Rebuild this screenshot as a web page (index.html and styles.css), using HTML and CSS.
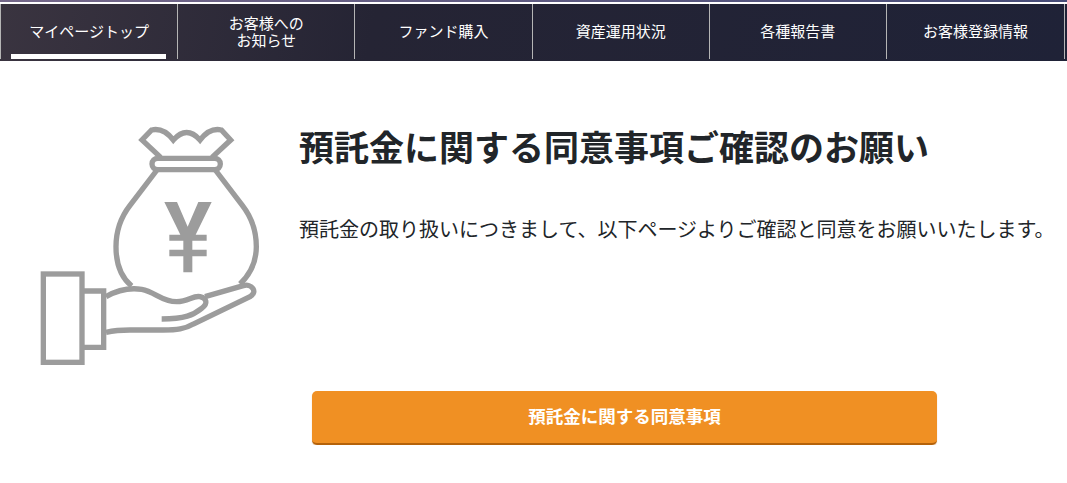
FILE: index.html
```html
<!DOCTYPE html>
<html lang="ja">
  <head>
    <meta charset="utf-8">
    <link rel="stylesheet" href="styles.css">
  </head>
  <body>
    <div class="topbar"></div>
    <nav class="gnav">
      <a class="gnav-item active" href="#"><span>マイページトップ</span></a>
      <a class="gnav-item" href="#"><span>お客様への<br>お知らせ</span></a>
      <a class="gnav-item" href="#"><span>ファンド購入</span></a>
      <a class="gnav-item" href="#"><span>資産運用状況</span></a>
      <a class="gnav-item" href="#"><span>各種報告書</span></a>
      <a class="gnav-item" href="#"><span>お客様登録情報</span></a>
    </nav>

    <main class="content">
      <div class="notice">
        <svg class="notice-icon" viewBox="0 0 720 750" width="240" height="250">
          <!-- cuff -->
          <rect x="40" y="462" width="116" height="265" />
          <path d="M156 513H221V682H156" />
          <!-- bag -->
          <path d="M392 112L336 60L365 30Q400 22 430 60Q470 15 510 60Q540 22 574 30L602 60L546 112" />
          <rect x="366" y="115" width="205" height="34" rx="17" />
          <path d="M381 150L300 256Q258 310 258 380Q258 460 305 498" />
          <path d="M556 150L637 256Q679 310 679 380Q679 445 630 492" />
          <!-- hand -->
          <path d="M228 530Q280 500 335 508C375 515 395 545 440 545C475 545 490 525 510 530C530 535 535 550 515 565C490 585 465 597 395 597" />
          <path d="M525 530L640 497C665 490 685 515 660 530L490 612C465 627 440 630 400 630H300Q260 630 228 637" />
          <!-- yen -->
          <path class="yen" d="M403 246H441L473 320L505 246H545L497 344H530V362H487V389H530V409H487V457H460V409H418V389H460V362H418V344H451Z" />
        </svg>
        <div class="notice-body">
          <h1 class="notice-title">預託金に関する同意事項ご確認のお願い</h1>
          <p class="notice-text">預託金の取り扱いにつきまして、以下ページよりご確認と同意をお願いいたします。</p>
        </div>
      </div>
      <a class="btn-orange" href="#">預託金に関する同意事項</a>
    </main>
  </body>
</html>
```

FILE: styles.css
```css
/* CSS styles */
body {
  margin: 0;
  background-color: #fff;
  color: #212529;
  font-family: "Noto Sans CJK JP", "Noto Sans", sans-serif;
}

a {
  text-decoration: none;
}

.topbar {
  height: 2px;
  background: linear-gradient(90deg, #75688a 0%, #474c78 100%);
}

.gnav {
  display: grid;
  grid-template-columns: repeat(5, 177.2px) 1fr;
  height: 57px;
  padding-right: 3px;
  border-top: 2px solid #fff;
  background: linear-gradient(100deg, #3a3440 0%, #252434 35%, #1f2237 100%);
}

.gnav-item {
  position: relative;
  display: flex;
  align-items: center;
  justify-content: center;
  box-sizing: border-box;
  height: 55px;
  padding-bottom: 2px;
  border-left: 1px solid #b5b5b5;
  color: #fff;
  font-size: 15px;
  line-height: 17px;
  text-align: center;
}

.gnav-item:last-child {
  box-shadow: 1px 0 0 #b5b5b5;
}

.gnav-item.active::after {
  content: "";
  position: absolute;
  left: 10px;
  right: 11px;
  bottom: 0;
  height: 5px;
  background-color: #fff;
}

.content {
  padding: 59px 0 0 30px;
}

.notice {
  display: flex;
  height: 271px;
}

.notice-icon {
  flex: none;
  fill: none;
  stroke: #9c9c9c;
  stroke-width: 16;
}

.notice-icon .yen {
  fill: #9c9c9c;
  stroke: none;
}

.notice-body {
  margin-left: 29px;
}

.notice-title {
  margin: 0;
  font-size: 35px;
  font-weight: 700;
  line-height: 52px;
  white-space: nowrap;
}

.notice-text {
  margin: 42px 0 0;
  font-size: 20px;
  line-height: 30px;
  white-space: nowrap;
}

.btn-orange {
  display: block;
  box-sizing: border-box;
  width: 625px;
  height: 54px;
  margin-left: 282px;
  border-bottom: 2px solid #b5620a;
  border-radius: 5px;
  background-color: #f09023;
  box-shadow: 0 1px 1px rgba(181, 98, 10, 0.4);
  color: #fff;
  font-size: 17.5px;
  font-weight: 700;
  line-height: 49px;
  text-align: center;
}
```
